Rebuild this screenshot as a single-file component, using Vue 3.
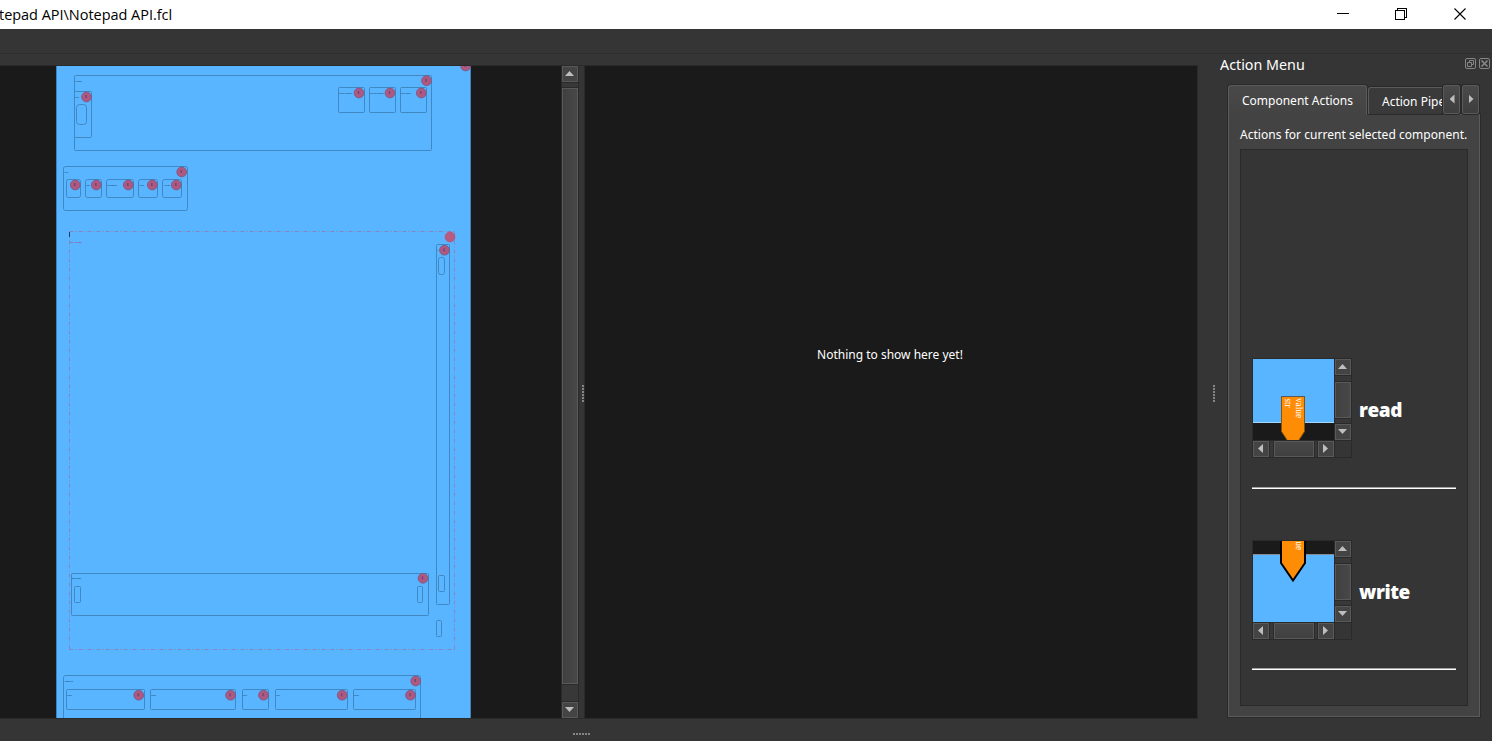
<script setup>
const boxes = [
  [74, 75, 357, 75, 1], [74, 91, 17, 46, 1], [76, 104, 10, 20, 3],
  [338, 87, 26, 25, 1], [369, 87, 26, 25, 1], [400, 87, 26, 25, 1],
  [63, 166, 124, 44, 2], [66, 179, 14, 18, 2], [85, 179, 16, 18, 2],
  [106, 179, 27, 18, 2], [138, 179, 19, 18, 2], [162, 179, 19, 18, 2],
  [436, 244, 13, 360, 1], [438, 257, 6, 17, 2], [438, 575, 6, 16, 1],
  [436, 620, 5, 16, 1], [71, 573, 357, 42, 1], [74, 586, 6, 16, 1],
  [417, 586, 5, 16, 1], [63, 675, 357, 60, 2], [66, 689, 78, 20, 1],
  [150, 689, 85, 20, 1], [242, 689, 26, 20, 1], [275, 689, 72, 20, 1],
  [353, 689, 62, 20, 1],
]
const dots = [
  [465.6, 66], [426.5, 80.7], [359, 93], [390, 93], [421.3, 93], [86.5, 97],
  [181.7, 172], [75.3, 185], [96.3, 185], [128.3, 185], [152.3, 185], [176.3, 185],
  [444.5, 250.2], [423, 578.3], [415.7, 681], [138.7, 695.2],
  [230.6, 695.2], [263.5, 695.2], [342.2, 695.2], [410.5, 695.2],
]
const labels = [
  [75, 82, 'Header', 7], [75, 98, 'Icon', 4], [339, 94, 'Minimize Button', 13], [370, 94, 'Maximize Button', 14],
  [401, 94, 'Close Button', 10], [64.5, 173, 'Menu', 4], [86.5, 186, 'Edit', 3],
  [107, 186, 'Formatting', 10], [139, 186, 'View', 5], [164, 186, 'Help', 6],
  [437, 251, 'V', 1.5], [72, 579, 'Scrollbar', 9], [65, 682, 'Status bar', 8],
  [67, 696, 'Label', 5], [151, 696, 'Label', 5], [243, 696, 'Zoom', 4],
  [276, 696, 'Line', 4], [354, 696, 'Code', 5],
]
const actions = ['read', 'write']
</script>

<template>
  <div class="window">
    <header class="titlebar">
      <span class="path">tepad API\Notepad API.fcl</span>
      <svg class="controls" width="155" height="29" fill="none" stroke="#000" shape-rendering="crispEdges">
        <path d="M0 13.500h12M58.500 10.500h9v9h-9zM60.500 10.500v-2h9v9h-2" />
        <path d="M117.500 8.500l11 11M128.500 8.500l-11 11" shape-rendering="auto" stroke-width="1.100" />
      </svg>
    </header>
    <div class="toolbar"></div>

    <div class="workspace">
      <main class="center">
        <div class="views">
          <section class="diagram">
            <svg width="561" height="652" viewBox="0 66 561 652">
              <rect x="56" y="60" width="415" height="670" fill="#59b5ff" />
              <path d="M56.500 60v670M470.500 60v670" stroke="#3f83b9" />
              <g fill="none" stroke="#4088c2">
                <rect v-for="(b, i) in boxes" :key="i" :x="b[0] + .5" :y="b[1] + .5" :width="b[2]" :height="b[3]" :rx="b[4]" />
              </g>
              <path d="M69.500 231.500h385M454.500 231.500v418M69.500 649.500h385M69.500 231.500v418" stroke="#8586bf" stroke-dasharray="4 2 1 2" />
              <path d="M69.500 232v5" stroke="#173f68" />
              <g fill="#0d3558" class="tiny">
                <text v-for="(l, i) in labels" :key="i" :x="l[0]" :y="l[1]" :textLength="l[3]" lengthAdjust="spacingAndGlyphs">{{ l[2] }}</text>
              </g>
              <text x="70" y="243" class="tiny" fill="#c9063c" textLength="12" lengthAdjust="spacingAndGlyphs">Text Area Box</text>
              <g v-for="(d, i) in dots" :key="i">
                <circle :cx="d[0]" :cy="d[1]" r="4.900" fill="#ad5a83" stroke="#7c5480" stroke-width=".8" />
                <path :d="`M${d[0] - .5} ${d[1] - 2}v3`" stroke="#793f70" stroke-width="1.400" />
              </g>
              <circle cx="450" cy="237" r="4.900" fill="#b85b80" stroke="#c24f75" stroke-width=".8" />
            </svg>
          </section>
          <div class="scroll vertical main-scroll">
            <div class="btn"><i class="arrow up"></i></div>
            <div class="thumb"></div>
            <div class="btn"><i class="arrow down"></i></div>
          </div>
          <div class="splitter"><div class="grip column"><b v-for="n in 6" :key="n"></b></div></div>
          <section class="empty"><p>Nothing to show here yet!</p></section>
        </div>
        <div class="grip bottom"><b v-for="n in 6" :key="n"></b></div>
      </main>
      <div class="dock-handle"><div class="grip column"><b v-for="n in 6" :key="n"></b></div></div>

      <aside class="dock">
        <div class="dock-title">
          <span>Action Menu</span>
          <svg width="26" height="12" fill="none" stroke="#858585">
            <rect x=".5" y=".5" width="10" height="10" rx="1.500" />
            <path d="M2.500 4.500h4v4h-4zM4.500 4.500v-2h4v4h-2" />
            <rect x="14.500" y=".5" width="10" height="10" rx="1.500" />
            <path d="M16.500 2.500l6 6M22.500 2.500l-6 6" stroke-width="1.700" />
          </svg>
        </div>
        <div class="tabs">
          <div class="tab active"><span>Component Actions</span></div>
          <div class="tab second"><span>Action Pipelines</span></div>
          <div class="tab-scroll"><i class="arrow left"></i></div>
          <div class="tab-scroll"><i class="arrow right"></i></div>
        </div>
        <div class="pane">
          <p class="hint">Actions for current selected component.</p>
          <div class="list">
            <div v-for="a in actions" :key="a" class="action" :class="a">
              <div class="row">
                <div class="preview">
                  <svg v-if="a === 'read'" width="81" height="81">
                    <rect width="81" height="63" fill="#59b5ff" />
                    <path d="M0 63.500h81" stroke="#a6d5fa" />
                    <path d="M28.500 37.500h23v35L40 90 28.500 72.500z" fill="#ff8c05" stroke="#8b520d" />
                    <path d="M28 37.500h24" stroke="#4d5c62" />
                    <g class="pin"><text transform="translate(43 39) rotate(90)" textLength="20" lengthAdjust="spacingAndGlyphs">value</text><text transform="translate(32 39.500) rotate(90)" textLength="9" lengthAdjust="spacingAndGlyphs">str</text></g>
                  </svg>
                  <svg v-else width="81" height="81">
                    <rect y="13" width="81" height="68" fill="#59b5ff" />
                    <path d="M0 13.500h81" stroke="#858b90" />
                    <path d="M28-12h24v34L40 39.500 28 22z" fill="#ff8c05" stroke="#000" stroke-width="2" />
                    <g class="pin"><text transform="translate(43 -11) rotate(90)" textLength="20" lengthAdjust="spacingAndGlyphs">value</text></g>
                  </svg>
                  <div class="scroll vertical">
                    <div class="btn"><i class="arrow up"></i></div>
                    <div class="thumb"></div>
                    <div class="btn"><i class="arrow down"></i></div>
                  </div>
                  <div class="scroll horizontal">
                    <div class="btn"><i class="arrow left"></i></div>
                    <div class="thumb"></div>
                    <div class="btn"><i class="arrow right"></i></div>
                  </div>
                </div>
                <span class="name">{{ a }}</span>
              </div>
              <div class="rule"></div>
            </div>
          </div>
        </div>
      </aside>
    </div>
  </div>
</template>

<style>
body { background: #353535; overflow: hidden; }
</style>

<style scoped>
* { box-sizing: border-box; }
p { margin: 0; }
svg { display: block; }
.window { width: 1492px; height: 741px; background: #353535; color: #fff; font: 12px "Noto Sans", sans-serif; overflow: hidden; white-space: nowrap; }
.titlebar { height: 29px; background: #fff; color: #000; display: flex; justify-content: space-between; }
.path { font: 14.5px/29px "Open Sans", sans-serif; letter-spacing: -.03px; margin-left: -1px; }
.toolbar { height: 25px; border-bottom: 1px solid #2e2e2e; }
.workspace { display: flex; height: 687px; }
.center { width: 1198px; padding-top: 11px; }
.views { display: flex; height: 654px; border: solid #2a2a2a; border-width: 1px 0; }
.diagram { width: 561px; background: #1a1a1a; }
.splitter { width: 7px; background: #353535; border-left: 1px solid #2a2a2a; border-right: 1px solid #2a2a2a; padding: 319px 0 0 3px; }
.empty { width: 613px; background: #1a1a1a; border-right: 1px solid #2a2a2a; padding-top: 280px; }
.empty p { text-align: center; line-height: 17px; padding-right: 2px; }
.grip { display: flex; gap: 1px; }
.grip.column { flex-direction: column; }
.grip b { width: 2px; height: 2px; background: #858585; flex: none; }
.bottom { margin: 14px 0 0 573px; }
.dock-handle { width: 22px; padding: 331px 0 0 15px; }

.scroll { display: flex; background: #383838; }
.vertical { flex-direction: column; width: 17px; border-left: 1px solid #2a2a2a; }
.horizontal { border-top: 1px solid #2a2a2a; height: 17px; }
.btn, .thumb { border: 1px solid #595959; background: #444; box-shadow: 0 0 0 1px #2a2a2a; }
.btn { width: 16px; height: 16px; flex: none; display: grid; place-items: center; }
.vertical .thumb { flex: 1; margin: 7px 0 6px; background: linear-gradient(90deg, #404040, #484848); }
.horizontal .thumb { flex: 1; margin: 0 4px 0 5px; background: linear-gradient(#484848, #404040); }
.main-scroll { border-right: 0; overflow: hidden; }
.main-scroll .thumb { margin: 6px 0 18px; }
.arrow { display: block; background: #bebebe; margin: 0 1px 1px 0; }
.up, .down { width: 9px; height: 5px; }
.left, .right { width: 5px; height: 9px; }
.up { clip-path: polygon(50% 0, 100% 100%, 0 100%); }
.down { clip-path: polygon(0 0, 100% 0, 50% 100%); }
.left { clip-path: polygon(100% 0, 100% 100%, 0 50%); }
.right { clip-path: polygon(0 0, 100% 50%, 0 100%); }

.dock { width: 272px; }
.dock-title { height: 31px; display: flex; justify-content: space-between; padding: 4px 1px 0 0; font: 14.3px/14px "Noto Sans", sans-serif; }
.tabs { display: flex; height: 29px; margin-left: 8px; }
.tab { line-height: 29px; border: 1px solid #5b5b5b; border-bottom: 0; border-radius: 3px 3px 0 0; box-shadow: 0 0 0 1px #2a2a2a; }
.active { width: 139px; height: 30px; background: linear-gradient(#494949, #434343); padding-left: 13px; position: relative; z-index: 1; clip-path: inset(-1px -1px 0 -1px); }
.second { width: 74px; margin: 2px 0 0 1px; border-right: 0; background: #3a3a3a; padding-left: 13px; line-height: 27px; overflow: hidden; border-radius: 3px 0 0; }
.tab-scroll { width: 17px; height: 29px; margin: 0 1px; border: 1px solid #5a5a5a; border-radius: 2px; background: linear-gradient(#4a4a4a, #3e3e3e); box-shadow: 0 0 0 1px #292929; display: grid; place-items: center; flex: none; position: relative; z-index: 1; }
.tab-scroll .arrow { margin: 0 0 1px 1px; }
.pane { margin-left: 8px; width: 252px; height: 603px; background: #434343; border: 1px solid #5b5b5b; box-shadow: 0 0 0 1px #2a2a2a; padding: 11px 11px 0; }
.hint { height: 23px; line-height: 17px; letter-spacing: .03px; }
.list { width: 228px; height: 557px; background: #353535; border: 1px solid #2a2a2a; padding: 208px 11px 0; }
.action { height: 182px; }
.row { display: flex; align-items: center; gap: 7px; }
.preview { width: 100px; height: 100px; border: 1px solid #2a2a2a; display: grid; grid-template: 81px 17px / 81px 17px; }
.preview svg { background: #1a1a1a; }
.name { font: 800 19px/24px "Open Sans", sans-serif; letter-spacing: -.4px; padding-top: 4px; }
.rule { width: 204px; height: 2px; margin-top: 29px; background: #fff; border-top: 1px solid #a0a0a0; }
.write .rule { margin-top: 28px; }
.tiny { font: 2.4px "Liberation Sans", sans-serif; }
.pin { font: 11px "Liberation Serif", serif; fill: #fff; }
</style>
